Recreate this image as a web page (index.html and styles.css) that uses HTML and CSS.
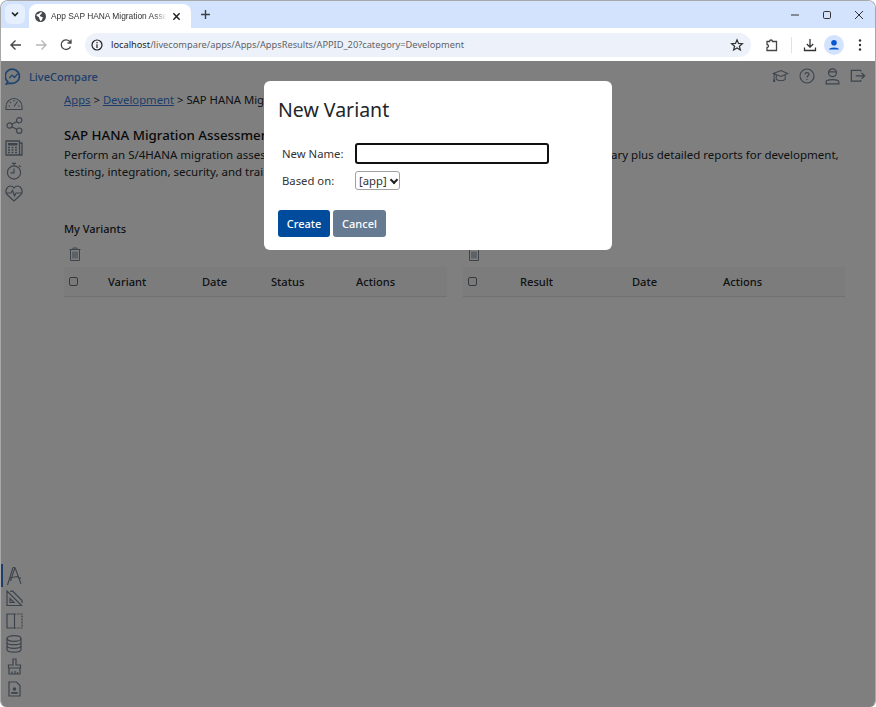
FILE: index.html
```html
<!DOCTYPE html>
<html lang="en">
<head>
<meta charset="utf-8">
<title>App SAP HANA Migration Assessment</title>
<link rel="stylesheet" href="styles.css">
</head>
<body>
<div class="window">
  <div class="tabbar">
    <button class="tabsearch"><svg width="10" height="10" viewBox="0 0 10 10"><path d="M2 3.500 5 6.500 8 3.500" fill="none" stroke="#1f1f1f" stroke-width="1.600"/></svg></button>
    <div class="tab">
      <svg class="favicon" width="11" height="11" viewBox="0 0 14 14"><circle cx="7" cy="7" r="7" fill="#45484d"/><path d="M2 4.500 5 3.500 7 1.500 9 2 8 4 6 5 7 7 10 8 9 11 7 13 5.500 10 5 8 2 6Z" fill="#fff"/></svg>
      <span class="tabtitle">App SAP HANA Migration Assessment</span>
      <svg class="tabclose" width="9" height="9" viewBox="0 0 10 10"><path d="M1.500 1.500 8.500 8.500M8.500 1.500 1.500 8.500" stroke="#1f1f1f" stroke-width="1.600"/></svg>
    </div>
    <svg class="newtab" width="11" height="11" viewBox="0 0 11 11"><path d="M5.500 1V10M1 5.500H10" stroke="#3c4043" stroke-width="1.400"/></svg>
    <div class="winbtns">
      <svg width="10" height="10" viewBox="0 0 10 10"><path d="M1 5H9" stroke="#333" stroke-width="1"/></svg>
      <svg width="10" height="10" viewBox="0 0 10 10"><rect x="1.500" y="1.500" width="7" height="7" rx="1.200" fill="none" stroke="#333"/></svg>
      <svg width="10" height="10" viewBox="0 0 10 10"><path d="M1 1 9 9M9 1 1 9" stroke="#333"/></svg>
    </div>
  </div>
  <div class="toolbar">
    <svg width="14" height="14" viewBox="0 0 14 14" class="tool back"><path d="M12 7H2.500M6.500 2.500 2 7l4.500 4.500" fill="none" stroke="#444746" stroke-width="1.400"/></svg>
    <svg width="14" height="14" viewBox="0 0 14 14" class="tool fwd"><path d="M2 7h9.500M7.500 2.500 12 7l-4.500 4.500" fill="none" stroke="#b5b7b9" stroke-width="1.400"/></svg>
    <svg width="14" height="14" viewBox="0 0 14 14" class="tool reload"><path d="M11.500 8.500A4.800 4.800 0 1 1 10.500 3.300L12 4.800M12 1.500V5H8.500" fill="none" stroke="#444746" stroke-width="1.300"/></svg>
    <div class="omnibox">
      <svg class="info" width="14" height="14" viewBox="0 0 14 14"><circle cx="7" cy="7" r="5" fill="none" stroke="#1f1f1f" stroke-width="1.200"/><path d="M7 6.200V10M7 4V5.200" stroke="#1f1f1f" stroke-width="1.200"/></svg>
      <span class="url"><span class="host">localhost</span>/livecompare/apps/Apps/AppsResults/APPID_20?category=Development</span>
      <svg class="star" width="14" height="14" viewBox="0 0 14 14"><path d="M7 1.800 8.500 5.400 12.400 5.700 9.400 8.200 10.400 12 7 10 3.600 12 4.600 8.200 1.600 5.700 5.500 5.400Z" fill="none" stroke="#333" stroke-width="1.200"/></svg>
    </div>
    <svg class="ext" width="14" height="14" viewBox="0 0 14 14"><path d="M2 3.500H4.500A1.500 1.500 0 0 1 7.500 3.500H11.500V12.500H2V9.500A1.500 1.500 0 0 0 2 6.500Z" fill="none" stroke="#444746" stroke-width="1.300"/></svg>
    <span class="tooldiv"></span>
    <svg class="dl" width="14" height="14" viewBox="0 0 14 14"><path d="M7 1V9M3.800 6 7 9.200 10.200 6M1.500 9.500V12.500H12.500V9.500" fill="none" stroke="#333" stroke-width="1.300"/></svg>
    <span class="avatar"><svg width="18" height="18" viewBox="0 0 18 18"><circle cx="9" cy="6.800" r="2.800" fill="#0b57d0"/><path d="M3.800 13.500C4.500 10.800 13.500 10.800 14.200 13.500Z" fill="#0b57d0"/></svg></span>
    <svg class="menu" width="4" height="14" viewBox="0 0 4 14"><circle cx="2" cy="2.500" r="1.200" fill="#333"/><circle cx="2" cy="7" r="1.200" fill="#333"/><circle cx="2" cy="11.500" r="1.200" fill="#333"/></svg>
  </div>

  <div class="app">
    <header class="apphead">
      <svg class="logo" width="17" height="17" viewBox="0 0 18 18"><path d="M3 14.500A7.500 7.500 0 1 1 6 16L1.500 16.800Z" fill="none" stroke="#3f8ae0" stroke-width="1.800"/><path d="M4.500 10.500 7.500 7.500 10 10 13.500 6" fill="none" stroke="#3f8ae0" stroke-width="1.400"/></svg>
      <span class="brand">LiveCompare</span>
      <nav class="headicons">
        <svg width="17" height="16" viewBox="0 0 20 18"><path d="M1.500 6 10.500 2.500 18.500 6 10.500 9.500ZM5 8V13C7 15 14 15 15.500 13V8M2.500 6.500V13" fill="none" stroke="#7a8899" stroke-width="1.200"/><rect x="1.300" y="13" width="2.400" height="3" fill="#7a8899"/></svg>
        <svg width="16" height="16" viewBox="0 0 18 18"><circle cx="9" cy="9" r="7.900" fill="none" stroke="#7a8899" stroke-width="1.300"/><path d="M6.700 7C6.700 4.500 11.300 4.500 11.300 7 11.300 8.800 9 8.800 9 10.800M9 12.300V13.500" fill="none" stroke="#7a8899" stroke-width="1.300"/></svg>
        <svg width="15" height="17" viewBox="0 0 16 18"><circle cx="8" cy="5" r="4.200" fill="none" stroke="#7a8899" stroke-width="1.300"/><path d="M4 4H12M1.200 16.800V14.500C1.200 11.500 14.800 11.500 14.800 14.500V16.800Z" fill="none" stroke="#7a8899" stroke-width="1.300"/></svg>
        <svg width="16" height="16" viewBox="0 0 17 18"><path d="M11.500 4V2.800H1V14.800H11.500V13.500M6 8.800H15.500M12.500 5.500 16 8.800 12.500 12" fill="none" stroke="#7a8899" stroke-width="1.400"/></svg>
      </nav>
    </header>
    <div class="appbody">
      <aside class="sidebar">
        <div class="sidegroup">
          <span class="sideitem"><svg width="18" height="13" viewBox="0 0 18 13"><path d="M1 9.500A8 8 0 0 1 17 9.500V12.500H1ZM9 9.500 12.500 4.500M3.500 9H5M13 9H14.500M5 5 6 6M9 3V4.500" fill="none" stroke="#7a8899" stroke-width="1.100"/></svg></span>
          <span class="sideitem"><svg width="17" height="17" viewBox="0 0 18 18"><circle cx="3.800" cy="9" r="2.800" fill="none" stroke="#7a8899" stroke-width="1.200"/><circle cx="14" cy="3.500" r="2.800" fill="none" stroke="#7a8899" stroke-width="1.200"/><circle cx="14" cy="14.500" r="2.800" fill="none" stroke="#7a8899" stroke-width="1.200"/><path d="M6.300 7.700 11.500 4.800M6.300 10.300 11.500 13.200" stroke="#7a8899" stroke-width="1.200"/></svg></span>
          <span class="sideitem"><svg width="18" height="16" viewBox="0 0 18 16"><path d="M1 1H14.500V15H1ZM14.500 3H17V15H14.500" fill="none" stroke="#7a8899" stroke-width="1.300"/><rect x="3" y="3" width="9.500" height="2.500" fill="#7a8899"/><path d="M3 7.500H12.500M3 10H12.500M3 12.500H12.500" stroke="#7a8899" stroke-width="1.500" stroke-dasharray="2 1.500"/></svg></span>
          <span class="sideitem"><svg width="17" height="18" viewBox="0 0 17 18"><circle cx="8" cy="10.500" r="6.600" fill="none" stroke="#7a8899" stroke-width="1.200"/><path d="M6 1.300H10M8 1.500V3.800M13 3.500 14.500 5M8 6.500V10.800H4.500" fill="none" stroke="#7a8899" stroke-width="1.200"/></svg></span>
          <span class="sideitem"><svg width="18" height="17" viewBox="0 0 18 17"><path d="M9 16 2.500 10C-1 6.500 2 1 5.500 1 7 1 8.300 2 9 3 9.700 2 11 1 12.500 1 16 1 19 6.500 15.500 10Z" fill="none" stroke="#7a8899" stroke-width="1.200"/><path d="M1 8H6L7.500 5.500 9.500 11 11 8H17" fill="none" stroke="#7a8899" stroke-width="1.200"/></svg></span>
        </div>
        <div class="sidegroup">
          <span class="sideitem active"><svg width="16" height="20" viewBox="0 0 16 20"><path d="M7 1.500 1.500 19M9 1.500 4.500 15M9 1.500 15 18M7 1.500H9M4 12 11 10.500 15 12.500" fill="none" stroke="#7a8899" stroke-width="1.100"/></svg></span>
          <span class="sideitem"><svg width="17" height="17" viewBox="0 0 17 17"><path d="M1 1 15.500 15.500H1ZM4 8.500V12.500H8ZM4 1.500 6.500 1 16 10.500V13" fill="none" stroke="#7a8899" stroke-width="1.200"/></svg></span>
          <span class="sideitem"><svg width="17" height="16" viewBox="0 0 17 16"><path d="M8.500 1H1V15H8.500V1" fill="none" stroke="#7a8899" stroke-width="1.200"/><path d="M8.500 1H16V15H8.500" fill="none" stroke="#7a8899" stroke-width="1.200" stroke-dasharray="2 1"/></svg></span>
          <span class="sideitem"><svg width="16" height="18" viewBox="0 0 16 18"><ellipse cx="8" cy="3.500" rx="7" ry="2.800" fill="none" stroke="#7a8899" stroke-width="1.200"/><path d="M1 3.500V14.500C1 18 15 18 15 14.500V3.500M1 7.200C1 10.500 15 10.500 15 7.200M1 10.800C1 14.200 15 14.200 15 10.800" fill="none" stroke="#7a8899" stroke-width="1.200"/></svg></span>
          <span class="sideitem"><svg width="15" height="17" viewBox="0 0 15 17"><path d="M6 1H9V7H13.500V10H1.500V7H6ZM2 10V16H13V10M5 16V13.500M8 16V13M10.500 16V14" fill="none" stroke="#7a8899" stroke-width="1.200"/></svg></span>
          <span class="sideitem"><svg width="13" height="16" viewBox="0 0 13 16"><path d="M1 1H8.500L12 4.500V15H1Z" fill="none" stroke="#7a8899" stroke-width="1.200"/><circle cx="6.500" cy="8" r="1.800" fill="#7a8899"/><rect x="3.200" y="11" width="6.600" height="1.800" fill="#7a8899"/></svg></span>
        </div>
      </aside>
      <main class="content">
        <div class="crumbs"><a href="#">Apps</a> &gt; <a href="#">Development</a> &gt; SAP HANA Migration Assessment</div>
        <h1 class="apptitle">SAP HANA Migration Assessment</h1>
        <p class="appdesc">Perform an S/4HANA migration assessment of your SAP system and view the latest results as a summary plus detailed reports for development, testing, integration, security, and training teams.</p>
        <div class="panels">
          <section class="panel">
            <h2 class="paneltitle">My Variants</h2>
            <svg class="trash" width="12" height="14" viewBox="0 0 12 14"><path d="M.500 2.500H11.500M4 2.500V1H8V2.500M1.500 2.500V13.500H10.500V2.500M4 4.500V11.500M6 4.500V11.500M8 4.500V11.500" fill="none" stroke="#7a8899"/></svg>
            <table class="grid">
              <colgroup><col class="c-a1"><col class="c-a2"><col class="c-a3"><col class="c-a4"><col></colgroup>
              <thead><tr><th><span class="check"></span></th><th>Variant</th><th>Date</th><th>Status</th><th>Actions</th></tr></thead>
            </table>
          </section>
          <section class="panel">
            <h2 class="paneltitle">My Results</h2>
            <svg class="trash" width="12" height="14" viewBox="0 0 12 14"><path d="M.500 2.500H11.500M4 2.500V1H8V2.500M1.500 2.500V13.500H10.500V2.500M4 4.500V11.500M6 4.500V11.500M8 4.500V11.500" fill="none" stroke="#7a8899"/></svg>
            <table class="grid">
              <colgroup><col class="c-b1"><col class="c-b2"><col class="c-b3"><col></colgroup>
              <thead><tr><th><span class="check"></span></th><th>Result</th><th>Date</th><th>Actions</th></tr></thead>
            </table>
          </section>
        </div>
      </main>
    </div>
    <div class="backdrop"></div>
    <div class="modal">
      <h3 class="modaltitle">New Variant</h3>
      <div class="formgrid">
        <label class="flabel" for="nn">New Name:</label>
        <input id="nn" class="finput" type="text">
        <label class="flabel" for="bo">Based on:</label>
        <span class="selectwrap"><select id="bo" class="fselect"><option>[app]</option></select></span>
      </div>
      <div class="actions">
        <button class="btn primary">Create</button>
        <button class="btn secondary">Cancel</button>
      </div>
    </div>
  </div>
</div>
</body>
</html>
```

FILE: styles.css
```css
* { box-sizing: border-box; }
html, body { margin: 0; height: 100%; background: #fff; overflow: hidden; }
body { font-family: "Noto Sans", "Open Sans", sans-serif; color: #212529; }
.window {
  width: 876px; height: 707px; display: flex; flex-direction: column;
  border: 1px solid #a8a8a8; border-bottom: 0; border-radius: 8px 8px 6px 6px; overflow: hidden;
  background: #fff;
}
.tabbar { height: 27px; background: #d3e3fd; display: flex; align-items: flex-end; position: relative; flex: none; }
.tabsearch { width: 20px; height: 20px; margin: 0 4px 4px 4px; border: 0; padding: 0; border-radius: 6px; background: #e6effd; display: flex; align-items: center; justify-content: center; }
.tab { width: 162px; height: 24px; background: #fff; border-radius: 8px 8px 0 0; display: flex; align-items: center; padding: 0 10px 0 6px; }
.favicon { flex: none; margin-right: 5px; }
.tabtitle { flex: 1; min-width: 0; white-space: nowrap; overflow: hidden; font-family: "Liberation Sans", Arial, sans-serif; font-size: 8.4px; color: #333; -webkit-mask-image: linear-gradient(90deg, #000 88%, transparent); mask-image: linear-gradient(90deg, #000 88%, transparent); }
.tabclose { flex: none; margin-left: 5px; }
.newtab { margin: 0 0 8px 9px; }
.winbtns { margin-left: auto; display: flex; gap: 22px; padding-right: 11px; align-self: center; }
.toolbar { height: 33px; flex: none; background: #fff; display: flex; align-items: center; padding: 0 13px 0 8px; }
.tool { flex: none; margin-right: 11px; }
.reload { margin-right: 12px; }
.omnibox { flex: 1; height: 24px; background: #edf2fa; border-radius: 12px; display: flex; align-items: center; padding: 0 7px 0 5px; margin-right: 14px; }
.info { flex: none; margin-right: 7px; }
.url { flex: 1; font-size: 9.27px; color: #5f6368; white-space: nowrap; overflow: hidden; }
.host { color: #1f1f1f; }
.star { flex: none; }
.ext { flex: none; }
.tooldiv { width: 1px; height: 16px; background: #d3e3fd; margin: 0 11px 0 12px; }
.dl { flex: none; margin-right: 7px; }
.avatar { width: 20px; height: 20px; border-radius: 50%; background: #d3e3fd; display: flex; align-items: center; justify-content: center; margin-right: 14px; }
.menu { flex: none; }

.app { flex: 1; position: relative; background: #fff; display: flex; flex-direction: column; min-height: 0; }
.apphead { height: 30px; flex: none; display: flex; align-items: center; padding: 0 9px 0 4px; }
.logo { flex: none; }
.brand { margin-left: 7px; font-size: 11px; font-weight: 500; color: #3a7cd8; }
.headicons { margin-left: auto; display: flex; align-items: center; gap: 9px; }
.headicons svg + svg { margin-left: 1px; }
.appbody { flex: 1; display: flex; min-height: 0; }
.sidebar { width: 25px; flex: none; display: flex; flex-direction: column; justify-content: space-between; padding: 1px 0 7px; }
.sidegroup { display: flex; flex-direction: column; }
.sideitem { height: 22.6px; display: flex; align-items: center; justify-content: center; padding-left: 1px; position: relative; }
.active::before { content: ""; position: absolute; left: 0; top: 0; width: 2px; height: 100%; background: #3a7cd8; }
.content { flex: 1; min-width: 0; padding: 0 30px 0 38px; font-size: 11.5px; }
.crumbs { line-height: 17px; white-space: nowrap; font-size: 11.300px; }
.crumbs a { color: #3a7cd8; }
.apptitle { margin: 17px 0 1px; font-size: 13.300px; font-weight: 500; line-height: 20px; color: #111; }
.appdesc { margin: 0; line-height: 17px; }
.panels { display: grid; grid-template-columns: 383px 382px; gap: 16px; margin-top: 40px; }
.paneltitle { margin: 0; font-size: 11px; font-weight: 500; line-height: 17px; }
.trash { display: block; margin: 10px 0 0 5px; }
.grid { width: 100%; table-layout: fixed; border-collapse: collapse; margin-top: 6px; }
.grid th { height: 29px; padding: 0; text-align: left; font-size: 11.100px; font-weight: 500; background: #f8f8f8; border-bottom: 1px solid #dee2e6; }
.c-a1 { width: 44px; } .c-a2 { width: 94px; } .c-a3 { width: 69px; } .c-a4 { width: 85px; }
.c-b1 { width: 57px; } .c-b2 { width: 112px; } .c-b3 { width: 91px; }
.check { display: block; width: 9px; height: 9px; margin-left: 5px; border: 1px solid #6c757d; border-radius: 2px; background: #f4f4f4; }

.backdrop { position: absolute; inset: 0; background: rgba(0,0,0,.5); }
.modal { position: absolute; left: 263px; top: 20px; width: 348px; height: 169px; background: #fff; border-radius: 6px; padding: 14px; color: #212529; }
.modaltitle { margin: 0; font-size: 19.500px; font-weight: 400; line-height: 30px; }
.formgrid { display: grid; grid-template-columns: 73px auto; justify-content: start; align-items: center; row-gap: 7px; margin: 18px 0 0 4px; font-size: 11.300px; }
.flabel { color: #333; }
.finput { width: 194px; height: 21px; border: 2px solid #111; border-radius: 3px; background: #fff; padding: 0 4px; outline: 0; }
.selectwrap { display: block; position: relative; width: 45px; height: 19px; }
.selectwrap::after { content: ""; position: absolute; left: 36px; top: 6px; width: 4px; height: 4px; border: solid #222; border-width: 0 2px 2px 0; transform: rotate(45deg); pointer-events: none; }
.fselect { appearance: none; -webkit-appearance: none; display: block; width: 45px; height: 19px; border: 1px solid #a0a0a0; border-radius: 3px; background: #fff; font: 11.300px "Noto Sans", sans-serif; color: #333; padding: 0 0 0 3px; }
.actions { display: flex; gap: 3px; margin-top: 20px; }
.btn { height: 27px; border: 0; border-radius: 3px; font: 500 11px "Noto Sans", sans-serif; color: #fff; padding: 0; }
.primary { width: 52px; background: #004b9b; }
.secondary { width: 53px; background: #667a92; }
```
